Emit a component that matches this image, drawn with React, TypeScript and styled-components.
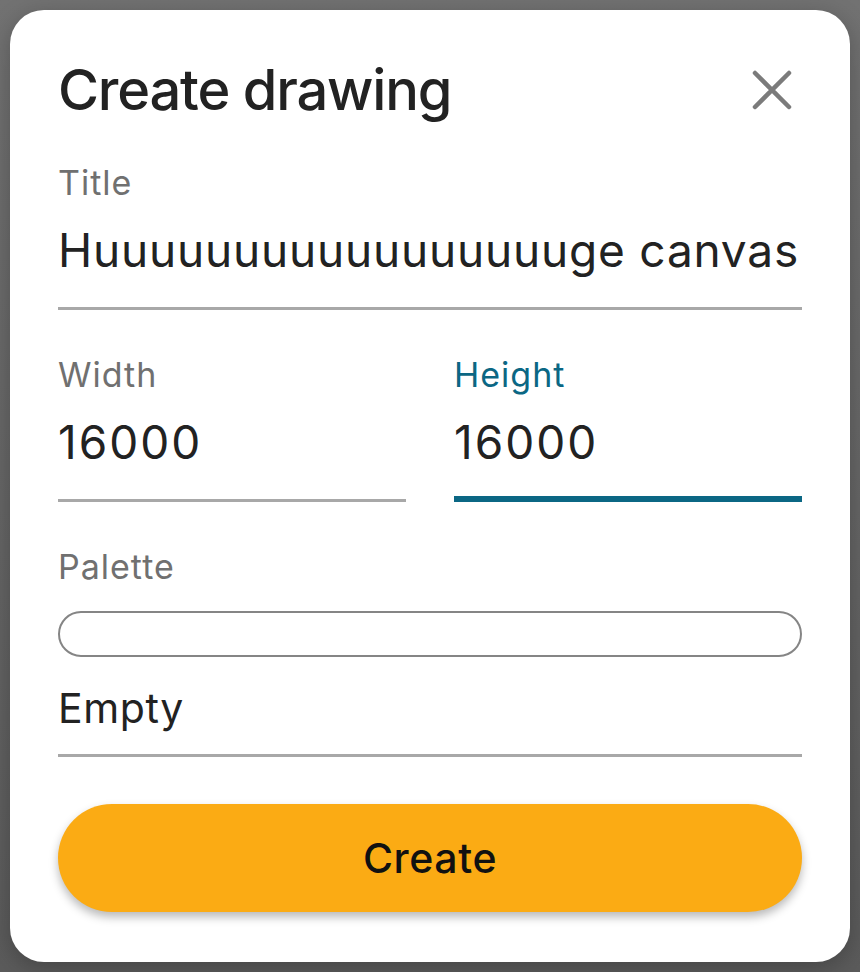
import React, { useState } from 'react';
import styled, { createGlobalStyle } from 'styled-components';

const GlobalStyle = createGlobalStyle`
  html, body {
    margin: 0;
    padding: 0;
  }
  body {
    background: linear-gradient(#727272, #5b5b5b);
    font-family: Inter, "Noto Sans", sans-serif;
    min-height: 972px;
  }
`;

const Backdrop = styled.div`
  padding: 10px;
  box-sizing: border-box;
  height: 972px;
`;

const Dialog = styled.div`
  box-sizing: border-box;
  width: 840px;
  height: 952px;
  background: #fff;
  border-radius: 34px;
  padding: 46px 48px 49px;
  display: flex;
  flex-direction: column;
  box-shadow: 0 6px 24px rgba(0, 0, 0, 0.25);
`;

const Header = styled.div`
  display: flex;
  align-items: center;
  justify-content: space-between;
  margin-bottom: 39px;
`;

const Title = styled.h1`
  margin: 0;
  font-size: 56px;
  line-height: 68px;
  font-weight: 500;
  color: #222;
  letter-spacing: -1.2px;
`;

const CloseButton = styled.button`
  width: 60px;
  height: 60px;
  border: 0;
  padding: 0;
  background: transparent;
  display: flex;
  align-items: center;
  justify-content: center;
  cursor: pointer;
`;

const Form = styled.div`
  display: flex;
  flex-direction: column;
  gap: 45px;
`;

const Row = styled.div`
  display: grid;
  grid-template-columns: 1fr 1fr;
  gap: 48px;
`;

const Field = styled.label`
  display: flex;
  flex-direction: column;
`;

const Label = styled.span<{ $focused?: boolean }>`
  font-size: 34px;
  line-height: 40px;
  letter-spacing: 1px;
  color: ${(p) => (p.$focused ? '#0b6784' : '#707070')};
`;

const InputBox = styled.div<{ $focused?: boolean }>`
  padding-top: 19px;
  padding-bottom: ${(p) => (p.$focused ? '26px' : '29px')};
  border-bottom: ${(p) => (p.$focused ? '6px solid #0b6784' : '3px solid #a8a8a8')};
`;

const TextInput = styled.input<{ $numeric?: boolean }>`
  display: block;
  width: 100%;
  box-sizing: border-box;
  border: 0;
  outline: 0;
  padding: 0;
  margin: 0;
  background: transparent;
  font-family: Inter, "Noto Sans", sans-serif;
  font-size: 46px;
  line-height: 56px;
  height: 56px;
  letter-spacing: ${(p) => (p.$numeric ? '2px' : '0.8px')};
  color: #222;
`;

const PaletteBar = styled.div`
  margin-top: 24px;
  height: 46px;
  box-sizing: border-box;
  border: 2px solid #858585;
  border-radius: 23px;
`;

const SelectBox = styled.div`
  padding-top: 23px;
  padding-bottom: 18px;
  border-bottom: 3px solid #a8a8a8;
  font-size: 41px;
  line-height: 56px;
  letter-spacing: 0.6px;
  color: #222;
`;

const CreateButton = styled.button`
  margin-top: 47px;
  height: 108px;
  width: 100%;
  border: 0;
  border-radius: 54px;
  background: #fbab14;
  color: #111;
  font-family: Inter, "Noto Sans", sans-serif;
  font-size: 41px;
  font-weight: 500;
  letter-spacing: 0.6px;
  box-shadow: 0 5px 10px rgba(0, 0, 0, 0.28);
  cursor: pointer;
`;

const CloseIcon = () => (
  <svg width="40" height="40" viewBox="0 0 40 40" fill="none">
    <path d="M3 3L37 37M37 3L3 37" stroke="#7b7b7b" strokeWidth="4.5" strokeLinecap="round" />
  </svg>
);

export default function App() {
  const [title, setTitle] = useState('Huuuuuuuuuuuuuuuuuge canvas');
  const [width, setWidth] = useState('16000');
  const [height, setHeight] = useState('16000');

  return (
    <>
      <GlobalStyle />
      <Backdrop>
        <Dialog>
          <Header>
            <Title>Create drawing</Title>
            <CloseButton aria-label="Close">
              <CloseIcon />
            </CloseButton>
          </Header>

          <Form>
            <Field>
              <Label>Title</Label>
              <InputBox>
                <TextInput value={title} onChange={(e) => setTitle(e.target.value)} />
              </InputBox>
            </Field>

            <Row>
              <Field>
                <Label>Width</Label>
                <InputBox>
                  <TextInput $numeric value={width} onChange={(e) => setWidth(e.target.value)} />
                </InputBox>
              </Field>
              <Field>
                <Label $focused>Height</Label>
                <InputBox $focused>
                  <TextInput $numeric value={height} onChange={(e) => setHeight(e.target.value)} />
                </InputBox>
              </Field>
            </Row>

            <Field>
              <Label>Palette</Label>
              <PaletteBar />
              <SelectBox>Empty</SelectBox>
            </Field>
          </Form>

          <CreateButton>Create</CreateButton>
        </Dialog>
      </Backdrop>
    </>
  );
}
